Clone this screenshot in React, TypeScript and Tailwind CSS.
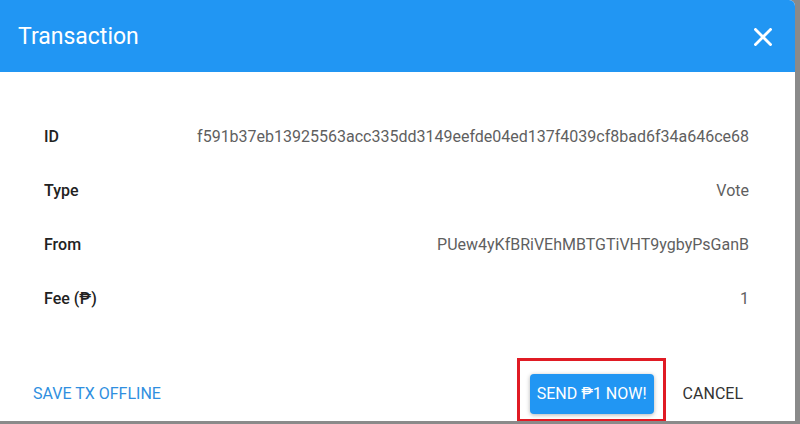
const rows = [
  { label: "ID", value: "f591b37eb13925563acc335dd3149eefde04ed137f4039cf8bad6f34a646ce68" },
  { label: "Type", value: "Vote" },
  { label: "From", value: "PUew4yKfBRiVEhMBTGTiVHT9ygbyPsGanB" },
  { label: "Fee (₱)", value: "1" },
];

export default function App() {
  return (
    <div className="w-[800px] h-[424px] bg-[#8a8a8a] overflow-hidden font-['Roboto',sans-serif]">
      <div className="w-[795px] h-[421px] bg-white rounded-tr-[6px] flex flex-col overflow-hidden">
        {/* Header */}
        <div className="h-[72px] bg-[#2196f3] flex items-center justify-between pl-[18px] pr-[23px] shrink-0">
          <h2 className="text-white text-[23px] font-normal pt-[3px]">Transaction</h2>
          <button className="text-white pt-[1px]">
            <svg width="18" height="18" viewBox="0 0 18 18">
              <path d="M1.5 1.5 L16.5 16.5 M16.5 1.5 L1.5 16.5" stroke="white" strokeWidth="2.8" strokeLinecap="square" />
            </svg>
          </button>
        </div>

        {/* Body */}
        <div className="flex-1 pt-[38px] pl-[44px] pr-[46px]">
          {rows.map((r) => (
            <div key={r.label} className="h-[54px] flex items-center justify-between text-[16px]">
              <span className="text-[#222222] font-medium">{r.label}</span>
              <span className="text-[#5f5f5f]">{r.value}</span>
            </div>
          ))}
        </div>

        {/* Footer */}
        <div className="h-[56px] flex items-center justify-between pt-[2px] pl-[33px] pr-[52px] shrink-0">
          <button className="text-[#2f8fe0] text-[16px] uppercase">Save tx offline</button>
          <div className="flex items-center">
            <div className="relative">
              <button className="h-[40px] w-[124px] rounded-[4px] bg-[#2196f3] text-white text-[16px] shadow-[0_1px_4px_rgba(0,0,0,0.3)]">
                SEND ₱1 NOW!
              </button>
              <div className="absolute left-[-13px] right-[-12px] top-[-16px] bottom-[-8px] border-[3px] border-[#e01b24] pointer-events-none" />
            </div>
            <button className="ml-[29px] text-[#333333] text-[16px]">CANCEL</button>
          </div>
        </div>
      </div>
    </div>
  );
}
